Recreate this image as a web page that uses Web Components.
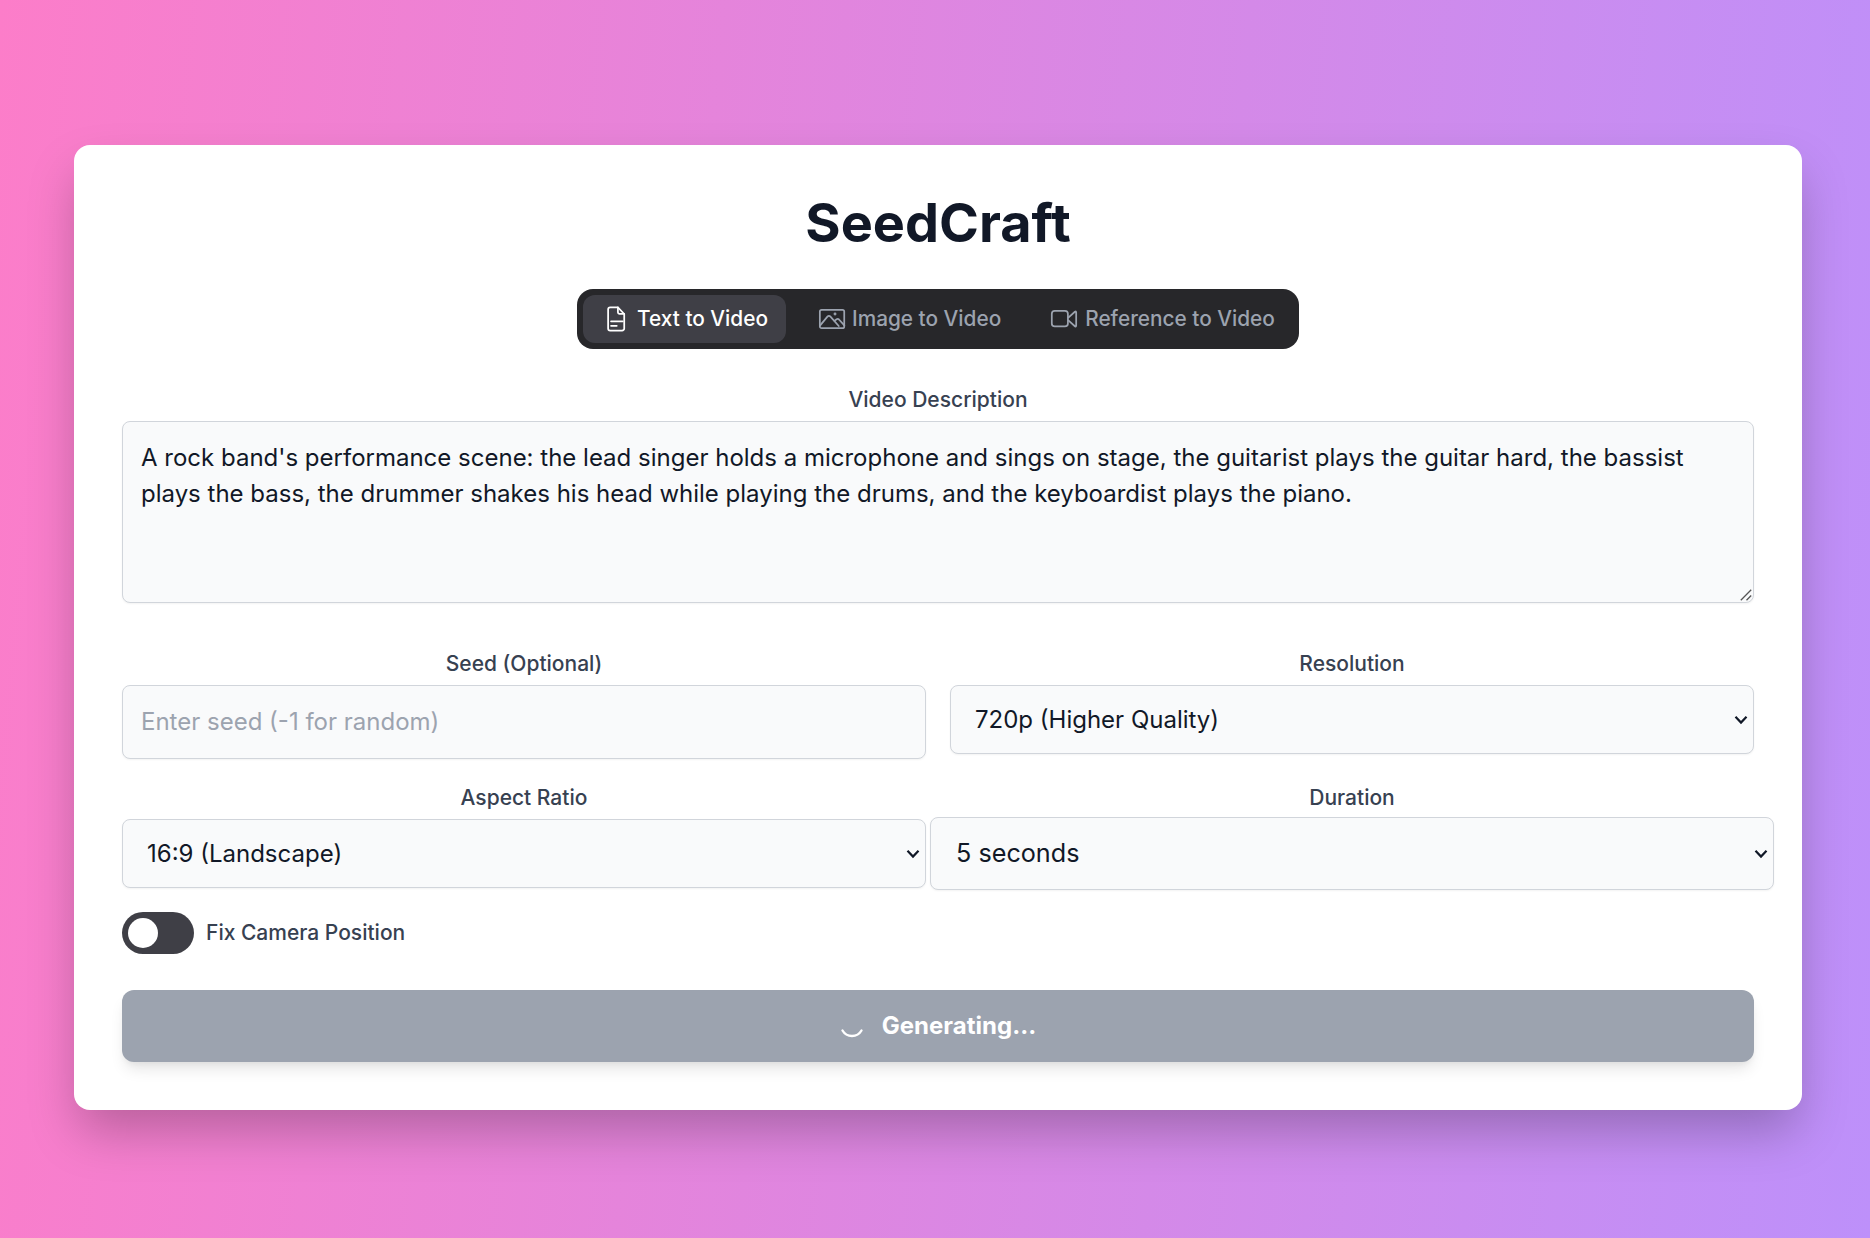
<!DOCTYPE html>
<html>
<head>
<meta charset="utf-8">
<title>SeedCraft</title>
<style>
html, body { margin: 0; padding: 0; }
body {
	min-height: 1238px;
	overflow: hidden;
	font-family: Inter, "Liberation Sans", sans-serif;
	background: linear-gradient(95deg, #fc7dc9, #bd90fa);
}
</style>
</head>
<body>
<seed-card>
	<seed-tabs></seed-tabs>
	<seed-field label="Video Description" class="desc">
		<textarea rows="4">A rock band's performance scene: the lead singer holds a microphone and sings on stage, the guitarist plays the guitar hard, the bassist plays the bass, the drummer shakes his head while playing the drums, and the keyboardist plays the piano.</textarea>
	</seed-field>
	<seed-grid>
		<seed-field label="Seed (Optional)"><input type="text" placeholder="Enter seed (-1 for random)"></seed-field>
		<seed-field label="Resolution"><select><option>720p (Higher Quality)</option><option>480p (Faster)</option></select></seed-field>
		<seed-field label="Aspect Ratio"><select><option>16:9 (Landscape)</option><option>9:16 (Portrait)</option></select></seed-field>
		<seed-field label="Duration" wide><select><option>5 seconds</option><option>10 seconds</option></select></seed-field>
	</seed-grid>
	<seed-toggle>Fix Camera Position</seed-toggle>
	<seed-button>Generating...</seed-button>
</seed-card>

<script>
const cardTemplate = document.createElement("template");
cardTemplate.innerHTML = `
<style>
:host {
	display: block;
	box-sizing: border-box;
	width: 1728px;
	margin: 145px 0 0 74px;
	padding: 48px;
	background: #fff;
	border-radius: 16px;
	box-shadow: 0 25px 50px -5px rgba(0, 0, 0, 0.25);
}
h1 {
	margin: 0 0 36px;
	font-size: 54px;
	line-height: 60px;
	font-weight: 700;
	text-align: center;
	color: #111827;
}
</style>
<h1>SeedCraft</h1>
<slot></slot>
`;

class SeedCard extends HTMLElement {
	constructor() {
		super().attachShadow({ mode: "open" }).appendChild(cardTemplate.content.cloneNode(true));
	}
}
customElements.define("seed-card", SeedCard);

const tabsTemplate = document.createElement("template");
tabsTemplate.innerHTML = `
<style>
:host {
	display: flex;
	justify-content: center;
	margin-bottom: 37px;
}
nav {
	display: flex;
	gap: 12px;
	padding: 6px;
	background: #27272a;
	border-radius: 16px;
}
button {
	appearance: none;
	display: flex;
	align-items: center;
	gap: 8px;
	height: 48px;
	padding: 0 18px;
	border: none;
	border-radius: 12px;
	background: transparent;
	color: #9ca3af;
	font: 500 20.8px/28px Inter, sans-serif;
}
button.active {
	background: #3f3f46;
	color: #fff;
}
svg {
	width: 28px;
	height: 28px;
	overflow: visible;
	fill: none;
	stroke: currentColor;
	stroke-width: 1.5;
	stroke-linejoin: round;
	stroke-linecap: round;
}
</style>
<nav>
	<button class="active">
		<svg viewBox="0 0 24 24"><path d="M6.100 3.900a1.800 1.800 0 0 1 1.800-1.800h6.600l5.400 5.600v12.400a1.800 1.800 0 0 1-1.800 1.800H7.900a1.800 1.800 0 0 1-1.800-1.800Z"/><path d="M14.500 2.100v4a1.500 1.500 0 0 0 1.500 1.600h3.900"/><path d="M8.600 14h10M8.600 17.800h4.900"/></svg>
		<span>Text to Video</span>
	</button>
	<button>
		<svg viewBox="0 0 24 24"><rect x="3.300" y="4.100" width="20.900" height="15.800" rx="1.500"/><path d="M3.400 17.700 9.800 10q1.300-1.500 2.600 0L19.500 18"/><path d="M15.700 13.600l2-1.400q1-.6 2 .2l4.600 5.100"/><circle cx="16.300" cy="7.700" r=".5"/></svg>
		<span>Image to Video</span>
	</button>
	<button>
		<svg viewBox="0 0 24 24"><rect x="2.400" y="5" width="13.800" height="13.400" rx="2.500"/><path d="M16.600 10.800l5.600-5q1.100-.8 1.100.6v11.200q0 1.400-1.100.6l-5.600-5"/></svg>
		<span>Reference to Video</span>
	</button>
</nav>
`;

class SeedTabs extends HTMLElement {
	constructor() {
		super().attachShadow({ mode: "open" }).appendChild(tabsTemplate.content.cloneNode(true));
	}
}
customElements.define("seed-tabs", SeedTabs);

const chevron = "url(\"data:image/svg+xml,%3Csvg xmlns='http://www.w3.org/2000/svg' width='14' height='10' viewBox='0 0 14 10'%3E%3Cpath d='M1.5 1.8 7 7.6l5.500-5.800' fill='none' stroke='%23111827' stroke-width='2.2'/%3E%3C/svg%3E\")";
const grip = "url(\"data:image/svg+xml,%3Csvg xmlns='http://www.w3.org/2000/svg' width='12' height='12' viewBox='0 0 12 12'%3E%3Cpath d='M.8 11.200 11.200.8M6.500 11.200l4.700-4.700' fill='none' stroke='%23555' stroke-width='1.300'/%3E%3C/svg%3E\")";

const fieldTemplate = document.createElement("template");
fieldTemplate.innerHTML = `
<style>
:host {
	display: block;
	min-width: 0;
}
label {
	display: block;
	margin-bottom: 7px;
	font: 500 21px/28px Inter, sans-serif;
	text-align: center;
	color: #374151;
}
::slotted(textarea), ::slotted(input), ::slotted(select) {
	display: block;
	box-sizing: border-box;
	width: 100%;
	margin: 0;
	border: 1.5px solid #d1d5db;
	border-radius: 8px;
	background-color: #f9fafb;
	color: #111827;
	font-family: Inter, sans-serif;
	font-size: 24px;
	outline: none;
	box-shadow: 0 1px 2px rgba(0, 0, 0, 0.05);
}
::slotted(textarea) {
	height: 182px;
	padding: 18px;
	line-height: 36px;
	resize: none;
	background-image: ${grip};
	background-repeat: no-repeat;
	background-position: right 1px bottom 1px;
}
::slotted(input) {
	height: 74px;
	padding: 0 18px 2px;
}
::slotted(input)::placeholder {
	color: #9ca3af;
}
::slotted(select) {
	appearance: none;
	height: 69px;
	padding: 0 40px 0 24px;
	background-image: ${chevron};
	background-repeat: no-repeat;
	background-position: right 5px center;
}
:host([wide]) ::slotted(select) {
	width: calc(100% + 40px);
	height: 73px;
	margin: -2px 0 0 -20px;
	padding: 0 40px 2px 25px;
	font-size: 25.2px;
}
</style>
<label></label>
<slot></slot>
`;

class SeedField extends HTMLElement {
	constructor() {
		super().attachShadow({ mode: "open" }).appendChild(fieldTemplate.content.cloneNode(true));
	}

	connectedCallback() {
		this.shadowRoot.querySelector("label").textContent = this.getAttribute("label");
	}
}
customElements.define("seed-field", SeedField);

const gridTemplate = document.createElement("template");
gridTemplate.innerHTML = `
<style>
:host {
	display: grid;
	grid-template-columns: 1fr 1fr;
	column-gap: 24px;
	row-gap: 25px;
	margin-top: 47px;
	align-items: start;
}
</style>
<slot></slot>
`;

class SeedGrid extends HTMLElement {
	constructor() {
		super().attachShadow({ mode: "open" }).appendChild(gridTemplate.content.cloneNode(true));
	}
}
customElements.define("seed-grid", SeedGrid);

const toggleTemplate = document.createElement("template");
toggleTemplate.innerHTML = `
<style>
:host {
	display: flex;
	align-items: center;
	gap: 12px;
	margin-top: 22px;
	font: 500 21px/28px Inter, sans-serif;
	color: #374151;
}
span {
	display: block;
	width: 72px;
	height: 42px;
	padding: 6px;
	box-sizing: border-box;
	border-radius: 21px;
	background: #3f3f46;
}
i {
	display: block;
	width: 30px;
	height: 30px;
	border-radius: 50%;
	background: #fff;
}
</style>
<span><i></i></span>
<slot></slot>
`;

class SeedToggle extends HTMLElement {
	constructor() {
		super().attachShadow({ mode: "open" }).appendChild(toggleTemplate.content.cloneNode(true));
	}
}
customElements.define("seed-toggle", SeedToggle);

const buttonTemplate = document.createElement("template");
buttonTemplate.innerHTML = `
<style>
:host {
	display: flex;
	align-items: center;
	justify-content: center;
	gap: 18px;
	height: 72px;
	margin-top: 36px;
	border-radius: 12px;
	background: #9ca3af;
	color: #fff;
	font: 700 24px/32px Inter, sans-serif;
	box-shadow: 0 10px 15px -3px rgba(0, 0, 0, 0.1), 0 4px 6px -2px rgba(0, 0, 0, 0.05);
}
svg {
	width: 24px;
	height: 24px;
	fill: none;
	stroke: #fff;
	stroke-width: 2.4;
	stroke-linecap: round;
}
</style>
<svg viewBox="0 0 24 24"><path d="M2.500 16.500A11 11 0 0 0 21.500 16.500"/></svg>
<slot></slot>
`;

class SeedButton extends HTMLElement {
	constructor() {
		super().attachShadow({ mode: "open" }).appendChild(buttonTemplate.content.cloneNode(true));
	}
}
customElements.define("seed-button", SeedButton);
</script>
</body>
</html>
